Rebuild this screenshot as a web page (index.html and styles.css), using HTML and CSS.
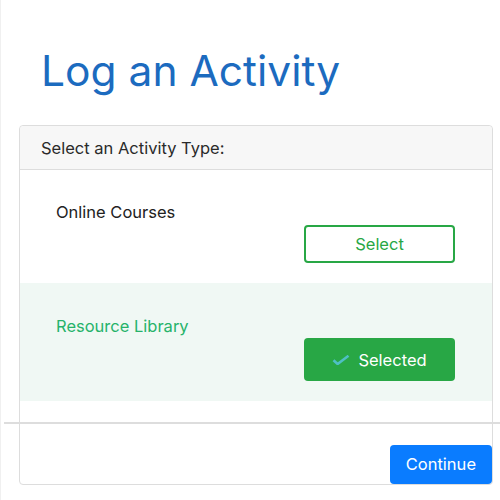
FILE: index.html
```html
<!DOCTYPE html>
<html lang="en">
  <head>
    <meta charset="UTF-8" />
    <meta name="viewport" content="width=device-width, initial-scale=1.0" />
    <title>Log an Activity</title>
    <link rel="stylesheet" href="styles.css">
  </head>
  <body>
    <div class="page">
      <h1>Log an Activity</h1>

      <div class="card">
        <div class="card-header">Select an Activity Type:</div>

        <div class="option">
          <div class="option-name">Online Courses</div>
          <button class="btn-select" type="button">Select</button>
        </div>

        <div class="option selected">
          <div class="option-name">Resource Library</div>
          <button class="btn-selected" type="button">
            <svg class="check" viewBox="0 0 18 10" width="18" height="10">
              <path d="M1.5 5.2 L5.6 9 L16.5 0.8" fill="none" stroke="#4fbfc4" stroke-width="2.6" />
            </svg>
            Selected
          </button>
        </div>

        <div class="card-footer">
          <button class="btn-continue" type="button">Continue</button>
        </div>
      </div>
    </div>
  </body>
</html>
```

FILE: styles.css
```css
html {
  overflow: hidden;
}
body {
  font-family: Inter, "Noto Sans", sans-serif;
  margin: 0;
  padding: 0;
  background-color: #fff;
  color: #222;
  border-left: 1px solid #f0f0f0;
  min-height: 500px;
  box-sizing: border-box;
}
.page {
  padding: 44px 0 0 18px;
}
h1 {
  font-size: 42.5px;
  font-weight: 400;
  color: #1c6bbf;
  margin: 0 0 27px 22px;
  line-height: 54px;
}
.card {
  width: 472px;
  border: 1px solid #ddd;
  border-radius: 4px;
}
.card-header {
  height: 43px;
  padding-left: 21px;
  display: flex;
  align-items: center;
  font-size: 16.5px;
  color: #2a2a2a;
  background-color: #f7f7f7;
  border-bottom: 1px solid #ddd;
  border-radius: 4px 4px 0 0;
}
.option {
  display: flex;
  flex-direction: column;
  align-items: flex-start;
  padding: 32px 37px 20px 36px;
}
.option-name {
  font-size: 16.5px;
  line-height: 20px;
}
.option button {
  align-self: flex-end;
  width: 151px;
  font-family: inherit;
  font-size: 16.5px;
  border-radius: 4px;
  cursor: pointer;
}
.btn-select {
  margin-top: 3px;
  height: 38px;
  background-color: #fff;
  color: #28a745;
  border: 2px solid #28a745;
}
.selected {
  padding-top: 33px;
  background-color: #f0f8f4;
}
.selected .option-name {
  color: #26b36a;
}
.btn-selected {
  margin-top: 2px;
  height: 43px;
  background-color: #28a745;
  color: #fff;
  border: none;
  display: flex;
  align-items: center;
  justify-content: center;
  gap: 8px;
}
.card-footer {
  margin: 21px -9px 0 -16px;
  padding: 21px 9px 0 0;
  border-top: 2px solid #ddd;
  display: flex;
  justify-content: flex-end;
}
.btn-continue {
  font-family: inherit;
  font-size: 16.5px;
  height: 39px;
  padding: 0 16px 2px;
  background-color: #0a7cff;
  color: #fff;
  border: none;
  border-radius: 4px;
  cursor: pointer;
}
```
